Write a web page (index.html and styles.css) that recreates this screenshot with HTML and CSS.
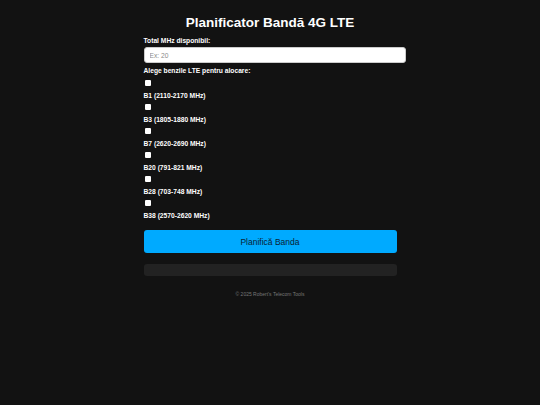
FILE: index.html
```html
<!DOCTYPE html>
<html lang="ro">
<head>
<meta charset="utf-8">
<title>Planificator Bandă 4G LTE</title>
<link rel="stylesheet" href="styles.css">
</head>
<body>
<div class="container">
  <h1 class="title">Planificator Bandă 4G LTE</h1>
  <label class="field-label" for="mhz">Total MHz disponibil:</label>
  <input class="text-input" id="mhz" type="text" placeholder="Ex: 20">
  <div class="field-label bands-label">Alege benzile LTE pentru alocare:</div>
  <div class="bands">
    <label class="band"><span class="box"></span><span class="band-name">B1 (2110-2170 MHz)</span></label>
    <label class="band"><span class="box"></span><span class="band-name">B3 (1805-1880 MHz)</span></label>
    <label class="band"><span class="box"></span><span class="band-name">B7 (2620-2690 MHz)</span></label>
    <label class="band"><span class="box"></span><span class="band-name">B20 (791-821 MHz)</span></label>
    <label class="band"><span class="box"></span><span class="band-name">B28 (703-748 MHz)</span></label>
    <label class="band"><span class="box"></span><span class="band-name">B38 (2570-2620 MHz)</span></label>
  </div>
  <button class="plan-btn" type="button">Planifică Banda</button>
  <div class="result"></div>
  <footer class="footer">© 2025 Robert's Telecom Tools</footer>
</div>
</body>
</html>
```
FILE: styles.css
```css
html, body {
  margin: 0;
  padding: 0;
  background: #121212;
  color: #ffffff;
  font-family: "Liberation Sans", Arial, sans-serif;
}
.container {
  width: 253px;
  margin: 0 auto;
  padding-top: 15px;
  display: flex;
  flex-direction: column;
}
.title {
  margin: 0 0 6px;
  font-size: 13.5px;
  font-weight: bold;
  text-align: center;
  line-height: 16px;
}
.field-label {
  display: block;
  font-size: 6.7px;
  font-weight: bold;
  line-height: 8px;
  margin-bottom: 2px;
}
.text-input {
  box-sizing: border-box;
  width: 262px;
  height: 16px;
  padding: 0 5px;
  border: 1px solid #ccc;
  border-radius: 3px;
  background: #ffffff;
  font-family: "Liberation Sans", Arial, sans-serif;
  font-size: 6.7px;
  color: #000;
  outline: none;
}
.text-input::placeholder {
  color: #8a8a8a;
}
.bands-label {
  margin-top: 4px;
  margin-bottom: 5px;
}
.bands {
  display: flex;
  flex-direction: column;
  gap: 4px;
}
.band {
  display: flex;
  flex-direction: column;
  gap: 6px;
  font-size: 6.7px;
  font-weight: bold;
  line-height: 8px;
}
.box {
  width: 6px;
  height: 6px;
  margin-left: 1px;
  background: #ffffff;
  border-radius: 1px;
}
.plan-btn {
  margin-top: 10px;
  height: 23px;
  border: none;
  border-radius: 3px;
  background: #00aaff;
  color: #0b2233;
  font-family: "Liberation Sans", Arial, sans-serif;
  font-size: 8.5px;
  cursor: pointer;
}
.result {
  margin-top: 11px;
  height: 12px;
  border-radius: 3px;
  background: #222222;
}
.footer {
  margin-top: 15px;
  text-align: center;
  font-size: 5px;
  line-height: 6px;
  color: #777;
}
```
